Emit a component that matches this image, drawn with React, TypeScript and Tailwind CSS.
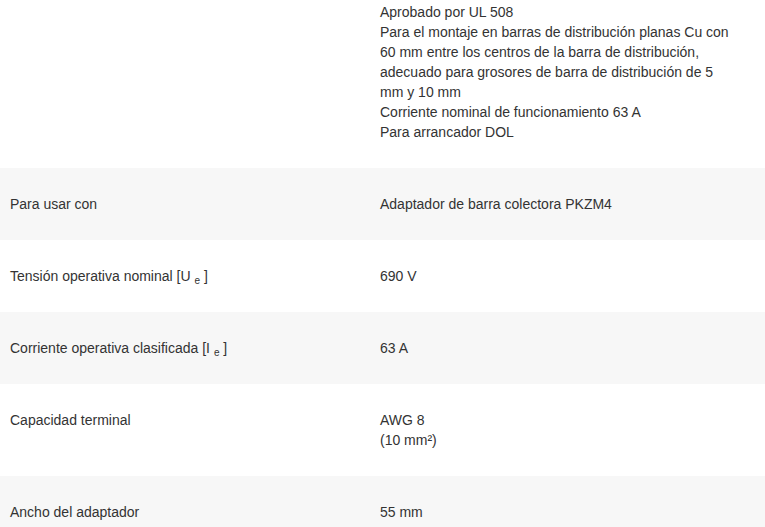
const rows: { label: React.ReactNode; value: React.ReactNode; top?: string }[] = [
  {
    label: "",
    value: (
      <>
        Aprobado por UL 508
        <br />
        Para el montaje en barras de distribución planas Cu con 60 mm entre los centros de la barra de distribución,
        adecuado para grosores de barra de distribución de 5 mm y 10 mm
        <br />
        Corriente nominal de funcionamiento 63 A
        <br />
        Para arrancador DOL
      </>
    ),
    top: "pt-[2px]",
  },
  { label: "Para usar con", value: "Adaptador de barra colectora PKZM4" },
  {
    label: (
      <>
        Tensión operativa nominal [U <sub className="text-[10px]">e</sub> ]
      </>
    ),
    value: "690 V",
  },
  {
    label: (
      <>
        Corriente operativa clasificada [I <sub className="text-[10px]">e</sub> ]
      </>
    ),
    value: "63 A",
  },
  {
    label: "Capacidad terminal",
    value: (
      <>
        AWG 8
        <br />
        (10 mm²)
      </>
    ),
  },
  { label: "Ancho del adaptador", value: "55 mm" },
];

export default function App() {
  return (
    <div className="h-[527px] w-[765px] overflow-hidden bg-white font-['Liberation_Sans',Arial,sans-serif] text-[14px] leading-[20px] text-[#333]">
      {rows.map((row, i) => (
        <div
          key={i}
          className={`flex ${row.top ?? "pt-[26px]"} pb-[26px] ${i % 2 === 1 ? "bg-[#f7f7f7]" : "bg-white"}`}
        >
          <div className="w-[370px] shrink-0 pl-[10px]">{row.label}</div>
          <div className="w-[363px] pl-[10px]">{row.value}</div>
        </div>
      ))}
    </div>
  );
}
